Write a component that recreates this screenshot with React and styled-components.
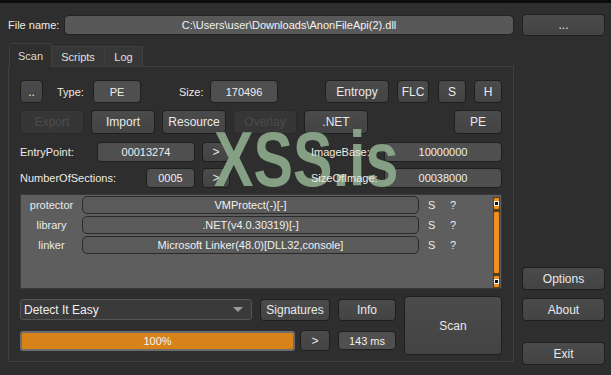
import React from "react";
import styled, { createGlobalStyle, css } from "styled-components";

const Global = createGlobalStyle`
  html, body { margin: 0; padding: 0; background: #2e2e2e; }
  body { font-family: "Liberation Sans", Arial, sans-serif; font-size: 11px; color: #ececec; }
  * { box-sizing: border-box; }
`;

const Window = styled.div`
  position: relative;
  width: 611px;
  height: 375px;
  border-top: 3px solid #0c0c0c;
  background: #2e2e2e;
  padding: 11px 6px 0 8px;
  overflow: hidden;
`;

const TopRow = styled.div`
  display: flex;
  align-items: center;
  height: 21px;
`;

const Label = styled.span`
  flex: none;
  width: ${(p) => (p.$w ? `${p.$w}px` : "auto")};
  margin-left: ${(p) => p.$ml || 0}px;
  color: #efebe2;
  font-size: 11px;
  white-space: nowrap;
  ${(p) =>
    p.$front &&
    css`
      position: relative;
      z-index: 3;
    `}
`;

const PathField = styled.div`
  flex: 1;
  height: 20px;
  border: 1px solid #222;
  border-radius: 5px;
  background: #585858;
  display: flex;
  align-items: center;
  justify-content: center;
  color: #f2f2f2;
  font-size: 11px;
`;

const Btn = styled.div`
  flex: none;
  width: ${(p) => p.$w}px;
  height: ${(p) => p.$h || 23}px;
  margin-left: ${(p) => p.$ml || 0}px;
  margin-top: ${(p) => p.$mt || 0}px;
  border: 1px solid #1f1f1f;
  border-radius: 4px;
  background: linear-gradient(#4b4b4b, #434343);
  display: flex;
  align-items: center;
  justify-content: center;
  color: #e9e9e9;
  font-size: 12px;
  white-space: nowrap;
  ${(p) =>
    p.$disabled &&
    css`
      background: #363636;
      border-color: #2a2a2a;
      color: #4c4c4c;
    `}
`;

const ValueBox = styled.div`
  flex: none;
  width: ${(p) => (p.$w ? `${p.$w}px` : "auto")};
  flex-grow: ${(p) => (p.$grow ? 1 : 0)};
  height: ${(p) => p.$h || 20}px;
  margin-left: ${(p) => p.$ml || 0}px;
  border: 1px solid #1f1f1f;
  border-radius: 4px;
  background: #4f4f4f;
  display: flex;
  align-items: center;
  justify-content: center;
  color: #eeeeee;
  font-size: 11px;
`;

const Body = styled.div`
  display: flex;
  margin-top: 8px;
`;

const TabWidget = styled.div`
  width: 506px;
  display: flex;
  flex-direction: column;
`;

const TabBar = styled.div`
  display: flex;
  align-items: flex-end;
  height: 23px;
  padding-left: 1px;
`;

const Tab = styled.div`
  height: ${(p) => (p.$active ? 24 : 20)}px;
  width: ${(p) => p.$w}px;
  display: flex;
  align-items: center;
  justify-content: center;
  font-size: 11px;
  color: ${(p) => (p.$active ? "#d8d8d8" : "#e0e0e0")};
  background: ${(p) => (p.$active ? "#2e2e2e" : "#373737")};
  border: 1px solid #3f3f3f;
  border-bottom: none;
  border-left: ${(p) => (p.$first ? "1px solid #3f3f3f" : "none")};
  border-radius: ${(p) => (p.$active ? "3px 3px 0 0" : "0")};
  margin-bottom: ${(p) => (p.$active ? "-1px" : "0")};
  position: relative;
  z-index: ${(p) => (p.$active ? 1 : 0)};
`;

const Panel = styled.div`
  height: 296px;
  border: 1px solid #3f3f3f;
  padding: 13px 11px 0 11px;
  display: flex;
  flex-direction: column;
`;

const Row = styled.div`
  display: flex;
  align-items: center;
  gap: ${(p) => p.$gap || 0}px;
  margin-top: ${(p) => p.$mt || 0}px;
  height: ${(p) => p.$h || 20}px;
`;

const Spacer = styled.div`
  flex: 1;
`;

const Results = styled.div`
  margin-top: 6px;
  height: 95px;
  border: 1px solid #3a3a3a;
  background: #5e5e5e;
  display: flex;
  padding: 1px 0 0 0;
`;

const ResultList = styled.div`
  flex: 1;
  display: flex;
  flex-direction: column;
  gap: 2px;
`;

const ResultRow = styled.div`
  display: flex;
  align-items: center;
  height: 18px;
`;

const RLabel = styled.div`
  width: 61px;
  text-align: center;
  color: #ececec;
  font-size: 11px;
`;

const RField = styled.div`
  width: 337px;
  height: 18px;
  border: 1px solid #2a2a2a;
  border-radius: 5px;
  background: #5a5a5a;
  display: flex;
  align-items: center;
  justify-content: center;
  color: #f0f0f0;
  font-size: 11px;
`;

const Flag = styled.span`
  width: ${(p) => p.$w}px;
  margin-left: ${(p) => p.$ml}px;
  color: #ececec;
  font-size: 11px;
`;

const Scrollbar = styled.div`
  width: 7px;
  margin: 1px 1px 0 0;
  height: 91px;
  display: flex;
  flex-direction: column;
  gap: 1px;
  background: #3a3a3a;
`;

const ScrollPart = styled.div`
  flex: ${(p) => (p.$grow ? 1 : "none")};
  height: ${(p) => (p.$grow ? "auto" : "13px")};
  background: #f0901f;
  border: 1px solid #6a3e08;
  border-radius: 2px;
  display: flex;
  align-items: center;
  justify-content: center;
`;

const Dot = styled.div`
  width: 3px;
  height: 3px;
  background: #111;
  outline: 1px solid #f7f7f7;
`;

const Bottom = styled.div`
  margin-top: 7px;
  display: flex;
  gap: 8px;
`;

const BottomLeft = styled.div`
  display: flex;
  flex-direction: column;
`;

const Combo = styled.div`
  width: 232px;
  height: 21px;
  border: 1px solid #555;
  border-radius: 3px;
  background: #3a3a3a;
  display: flex;
  align-items: center;
  padding: 0 8px 0 3px;
  font-size: 12px;
  color: #efefef;
`;

const Arrow = styled.div`
  width: 0;
  height: 0;
  border-left: 5px solid transparent;
  border-right: 5px solid transparent;
  border-top: 5px solid #9a9a9a;
`;

const Progress = styled.div`
  width: 275px;
  height: 20px;
  border: 2px solid #6d6d6d;
  border-radius: 3px;
  background: #d8821a;
  display: flex;
  align-items: center;
  justify-content: center;
  color: #f4f4f4;
  font-size: 11px;
`;

const Side = styled.div`
  flex: 1;
  margin-left: 8px;
  display: flex;
  flex-direction: column;
  padding-top: 224px;
`;

const Watermark = styled.div`
  position: absolute;
  left: 214px;
  top: 118px;
  z-index: 2;
  font-family: "Liberation Sans", Arial, sans-serif;
  font-weight: bold;
  font-size: 77px;
  line-height: 1;
  color: #8eac8e;
  opacity: 0.9;
  transform: scaleX(0.77);
  transform-origin: left top;
  pointer-events: none;
  white-space: nowrap;
`;

const results = [
  ["protector", "VMProtect(-)[-]"],
  ["library", ".NET(v4.0.30319)[-]"],
  ["linker", "Microsoft Linker(48.0)[DLL32,console]"],
];

export default function App() {
  return (
    <>
      <Global />
      <Window>
        <TopRow>
          <Label $w={56}>File name:</Label>
          <PathField>C:\Users\user\Downloads\AnonFileApi(2).dll</PathField>
          <Btn $w={83} $h={22} $ml={8}>...</Btn>
        </TopRow>
        <Body>
          <TabWidget>
            <TabBar>
              <Tab $active $first $w={43}>Scan</Tab>
              <Tab $w={53}>Scripts</Tab>
              <Tab $w={38}>Log</Tab>
            </TabBar>
            <Panel>
              <Row $h={23}>
                <Btn $w={23}>..</Btn>
                <Label $ml={14} $w={36}>Type:</Label>
                <ValueBox $w={48} $h={23}>PE</ValueBox>
                <Label $ml={38} $w={31}>Size:</Label>
                <ValueBox $w={68} $h={23}>170496</ValueBox>
                <Spacer />
                <Btn $w={64}>Entropy</Btn>
                <Btn $w={32} $ml={8}>FLC</Btn>
                <Btn $w={28} $ml={9}>S</Btn>
                <Btn $w={28} $ml={8}>H</Btn>
              </Row>
              <Row $h={24} $mt={7} $gap={7}>
                <Btn $w={64} $h={24} $disabled>Export</Btn>
                <Btn $w={64} $h={24}>Import</Btn>
                <Btn $w={64} $h={24}>Resource</Btn>
                <Btn $w={64} $h={24} $disabled>Overlay</Btn>
                <Btn $w={64} $h={24}>.NET</Btn>
                <Spacer />
                <Btn $w={48} $h={24}>PE</Btn>
              </Row>
              <Row $h={20} $mt={8}>
                <Label $w={77}>EntryPoint:</Label>
                <ValueBox $w={98}>00013274</ValueBox>
                <Btn $w={28} $h={20} $ml={7}>&gt;</Btn>
                <Label $ml={81} $w={73} $front>ImageBase:</Label>
                <ValueBox $grow>10000000</ValueBox>
              </Row>
              <Row $h={20} $mt={6}>
                <Label $w={126}>NumberOfSections:</Label>
                <ValueBox $w={49}>0005</ValueBox>
                <Btn $w={28} $h={20} $ml={7}>&gt;</Btn>
                <Label $ml={81} $w={73} $front>SizeOfImage:</Label>
                <ValueBox $grow>00038000</ValueBox>
              </Row>
              <Results>
                <ResultList>
                  {results.map(([k, v]) => (
                    <ResultRow key={k}>
                      <RLabel>{k}</RLabel>
                      <RField>{v}</RField>
                      <Flag $ml={9} $w={22}>S</Flag>
                      <Flag $ml={0} $w={10}>?</Flag>
                    </ResultRow>
                  ))}
                </ResultList>
                <Scrollbar>
                  <ScrollPart><Dot /></ScrollPart>
                  <ScrollPart $grow />
                  <ScrollPart><Dot /></ScrollPart>
                </Scrollbar>
              </Results>
              <Bottom>
                <BottomLeft>
                  <Row $h={21} $mt={3}>
                    <Combo>
                      <span>Detect It Easy</span>
                      <Spacer />
                      <Arrow />
                    </Combo>
                    <Btn $w={70} $h={22} $ml={8}>Signatures</Btn>
                    <Btn $w={58} $h={22} $ml={8}>Info</Btn>
                  </Row>
                  <Row $h={21} $mt={10}>
                    <Progress>100%</Progress>
                    <Btn $w={30} $h={21} $ml={5}>&gt;</Btn>
                    <ValueBox $w={58} $h={19} $ml={8}>143 ms</ValueBox>
                  </Row>
                </BottomLeft>
                <Btn $w={98} $h={59}>Scan</Btn>
              </Bottom>
            </Panel>
          </TabWidget>
          <Side>
            <Btn $w={83}>Options</Btn>
            <Btn $w={83} $mt={8}>About</Btn>
            <Btn $w={83} $mt={21}>Exit</Btn>
          </Side>
        </Body>
        <Watermark>XSS.is</Watermark>
      </Window>
    </>
  );
}
